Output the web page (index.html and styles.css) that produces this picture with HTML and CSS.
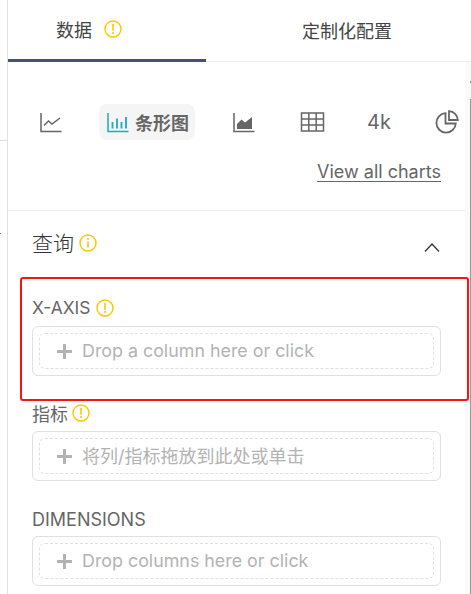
FILE: index.html
```html
<!DOCTYPE html>
<html lang="zh">
<head>
<meta charset="utf-8">
<title>Chart controls</title>
<link rel="stylesheet" href="styles.css">
</head>
<body>
<div class="app">
  <aside class="left-rail">
    <div class="rail-top"></div>
    <div class="rail-bottom"><span class="rail-dot"></span></div>
  </aside>
  <main class="panel">
    <nav class="tabs">
      <div class="tab tab-active"><span class="tab-text">数据</span>
        <svg class="icon-tab" viewBox="0 0 18 18"><circle cx="9" cy="9" r="8" fill="none" stroke="#fcc700" stroke-width="1.4"/><path d="M9 4.6v5.6" stroke="#fcc700" stroke-width="1.6" stroke-linecap="round"/><circle cx="9" cy="12.9" r="1" fill="#fcc700"/></svg>
      </div>
      <div class="tab"><span class="tab-text">定制化配置</span></div>
    </nav>
    <div class="scroll">
      <div class="content">
        <section class="charts">
          <div class="chart-row">
            <svg class="ci ci-line" viewBox="0 0 22 21"><path d="M1 1v18.500h20.500" fill="none" stroke="#666" stroke-width="1.500"/><path d="M4 13.500l4.500-4.500 3.500 3 8-6" fill="none" stroke="#666" stroke-width="1.500"/></svg>
            <div class="chip">
              <svg class="ci-bar" viewBox="0 0 22 21"><path d="M1 1v18.500h20.500" fill="none" stroke="#20a7c9" stroke-width="1.500"/><path d="M5.500 10v6.500M10 6.500v10M14.500 10v6.500M19 5v11.500" fill="none" stroke="#20a7c9" stroke-width="1.800"/></svg>
              <span class="chip-text">条形图</span>
            </div>
            <svg class="ci ci-area" viewBox="0 0 22 21"><path d="M1 1v18.500h20.500" fill="none" stroke="#666" stroke-width="1.500"/><path d="M4 17v-5l4.500-4.500 3.500 3 7-5.500v12z" fill="#666"/></svg>
            <svg class="ci ci-table" viewBox="0 0 24 20"><path d="M1 1h22v18h-22zM1 7h22M1 13h22M8.300 1v18M15.700 1v18" fill="none" stroke="#666" stroke-width="1.500"/></svg>
            <span class="big-num">4k</span>
            <svg class="ci ci-pie" viewBox="0 0 24 24"><path d="M10.500 3.200a9.700 9.700 0 1 0 10.300 10.300h-10.300z" fill="none" stroke="#666" stroke-width="1.800"/><path d="M14 1.200a9 9 0 0 1 8.800 8.800h-8.800z" fill="none" stroke="#666" stroke-width="1.800"/></svg>
          </div>
          <div class="view-all"><a class="view-link">View all charts</a></div>
        </section>
        <section class="query">
          <header class="query-head">
            <div class="query-title"><span class="query-text">查询</span>
              <svg class="icon-q" viewBox="0 0 18 18"><circle cx="9" cy="9" r="8" fill="none" stroke="#fcc700" stroke-width="1.400"/><path d="M9 8v5" stroke="#fcc700" stroke-width="1.600" stroke-linecap="round"/><circle cx="9" cy="5" r="1" fill="#fcc700"/></svg>
            </div>
            <svg class="chevron" viewBox="0 0 16 10"><path d="M1 9.500l7-7.500 7 7.500" fill="none" stroke="#333" stroke-width="1.300"/></svg>
          </header>
          <div class="field field-x">
            <div class="label label-x"><span class="label-text">X-AXIS</span>
              <svg class="icon-q" viewBox="0 0 18 18"><circle cx="9" cy="9" r="8" fill="none" stroke="#fcc700" stroke-width="1.400"/><path d="M9 4.600v5.600" stroke="#fcc700" stroke-width="1.600" stroke-linecap="round"/><circle cx="9" cy="12.900" r="1" fill="#fcc700"/></svg>
            </div>
            <div class="drop"><div class="dash"><span class="plus"></span><span class="hint hint-en">Drop a column here or click</span></div></div>
          </div>
          <div class="field field-m">
            <div class="label label-m">指标
              <svg class="icon-q" viewBox="0 0 18 18"><circle cx="9" cy="9" r="8" fill="none" stroke="#fcc700" stroke-width="1.400"/><path d="M9 4.600v5.600" stroke="#fcc700" stroke-width="1.600" stroke-linecap="round"/><circle cx="9" cy="12.900" r="1" fill="#fcc700"/></svg>
            </div>
            <div class="drop"><div class="dash"><span class="plus"></span><span class="hint">将列/指标拖放到此处或单击</span></div></div>
          </div>
          <div class="field field-d">
            <div class="label">DIMENSIONS</div>
            <div class="drop"><div class="dash"><span class="plus"></span><span class="hint hint-en">Drop columns here or click</span></div></div>
          </div>
        </section>
      </div>
      <div class="scrollbar"><span class="sb-arrow"></span><span class="sb-thumb"></span></div>
    </div>
  </main>
  <div class="red-frame"></div>
</div>
</body>
</html>
```

FILE: styles.css
```css
* { box-sizing: border-box; }
html, body { margin: 0; height: 100%; overflow: hidden; background: #fff; }
body { font-family: Inter, "Noto Sans CJK SC", sans-serif; color: #666; }
.app { position: relative; display: flex; width: 471px; height: 594px; overflow: hidden; }

.left-rail { width: 8px; flex: none; display: flex; flex-direction: column; border-right: 1px solid #e0e0e0; }
.rail-top { height: 141px; border-bottom: 1px solid #e0e0e0; }
.rail-bottom { flex: 1; position: relative; }
.rail-dot { position: absolute; left: 0; top: 92px; width: 1px; height: 1px; background: #777; }

.panel { flex: 1; min-width: 0; display: flex; flex-direction: column; }
.tabs { display: flex; height: 62px; flex: none; border-bottom: 1px solid #eee; }
.tab { display: flex; align-items: center; height: 62px; font-size: 18px; color: #444; }
.tab-text { margin-top: -2px; }
.tab:first-child { width: 198px; gap: 12px; padding-left: 48px; border-bottom: 3px solid #484f7c; }
.tab:last-child { flex: 1; padding-left: 96px; }
.icon-tab { width: 18px; height: 18px; margin-top: -1px; }

.scroll { flex: 1; min-height: 0; display: flex; }
.content { flex: 1; min-width: 0; }
.scrollbar { width: 6px; flex: none; display: flex; flex-direction: column; align-items: flex-end; background: #fafafa; padding-top: 19px; }
.sb-arrow { width: 1px; height: 2px; background: #999; }
.sb-thumb { width: 1px; flex: 1; margin-top: 16px; background: #999; }

.charts { height: 149px; padding-top: 42px; border-bottom: 1px solid #eee; }
.chart-row { display: flex; align-items: center; height: 36px; padding-left: 32px; }
.ci { flex: none; }
.ci-line { width: 22px; height: 21px; margin-right: 37px; }
.chip { display: flex; align-items: center; gap: 6px; width: 96px; height: 36px; flex: none; padding-left: 8px; border-radius: 8px; background: #f5f5f5; margin-right: 38px; }
.ci-bar { width: 22px; height: 21px; flex: none; }
.chip-text { font-size: 18px; font-weight: 700; color: #666; white-space: nowrap; }
.ci-area { width: 22px; height: 21px; margin-right: 45px; }
.ci-table { width: 25px; height: 20px; margin-right: 42px; }
.big-num { width: 25px; font-size: 20px; font-weight: 400; color: #666; margin-right: 43px; white-space: nowrap; }
.ci-pie { width: 24px; height: 24px; }
.view-all { display: flex; justify-content: flex-end; padding: 21px 24px 0 0; }
.view-link { font-size: 18px; line-height: 22px; color: #666; text-decoration: underline; text-underline-offset: 3px; }

.query { padding: 0 24px; }
.query-head { display: flex; justify-content: space-between; align-items: center; height: 65px; }
.query-title { display: flex; align-items: center; gap: 5px; font-size: 21px; font-weight: 300; color: #333; }
.query-text { margin-top: -4px; }
.query-title .icon-q { margin-top: -2px; }
.icon-q { width: 18px; height: 18px; flex: none; }
.chevron { width: 16px; height: 10px; margin-top: 6px; margin-right: 1px; }

.label { display: flex; align-items: center; gap: 6px; height: 22px; margin-bottom: 7px; font-size: 18px; color: #666; }
.label-x { font-size: 17.400px; }
.label-x .label-text { margin-top: -2px; }
.label-m { gap: 4px; }
.field-x { margin-top: 21px; }
.field-m { margin-top: 26px; }
.field-d { margin-top: 27px; }
.field-d .label { margin-bottom: 6px; }
.drop { height: 50px; padding: 6px; border: 1px solid #e0e0e0; border-radius: 6px; }
.dash { display: flex; align-items: center; gap: 10px; height: 36px; padding-left: 17px; border: 1px dashed #e0e0e0; border-radius: 6px; }
.plus { width: 15px; height: 15px; flex: none; background:
  linear-gradient(#b3b3b3, #b3b3b3) center / 15px 3px no-repeat,
  linear-gradient(#b3b3b3, #b3b3b3) center / 3px 15px no-repeat; }
.hint { font-size: 18px; color: #b3b3b3; white-space: nowrap; margin-top: -2px; }
.hint-en { font-size: 17.850px; }

.red-frame { position: absolute; left: 20px; top: 277px; width: 449px; height: 124px; border: 2px solid #f5170f; border-radius: 3px; pointer-events: none; }
```
